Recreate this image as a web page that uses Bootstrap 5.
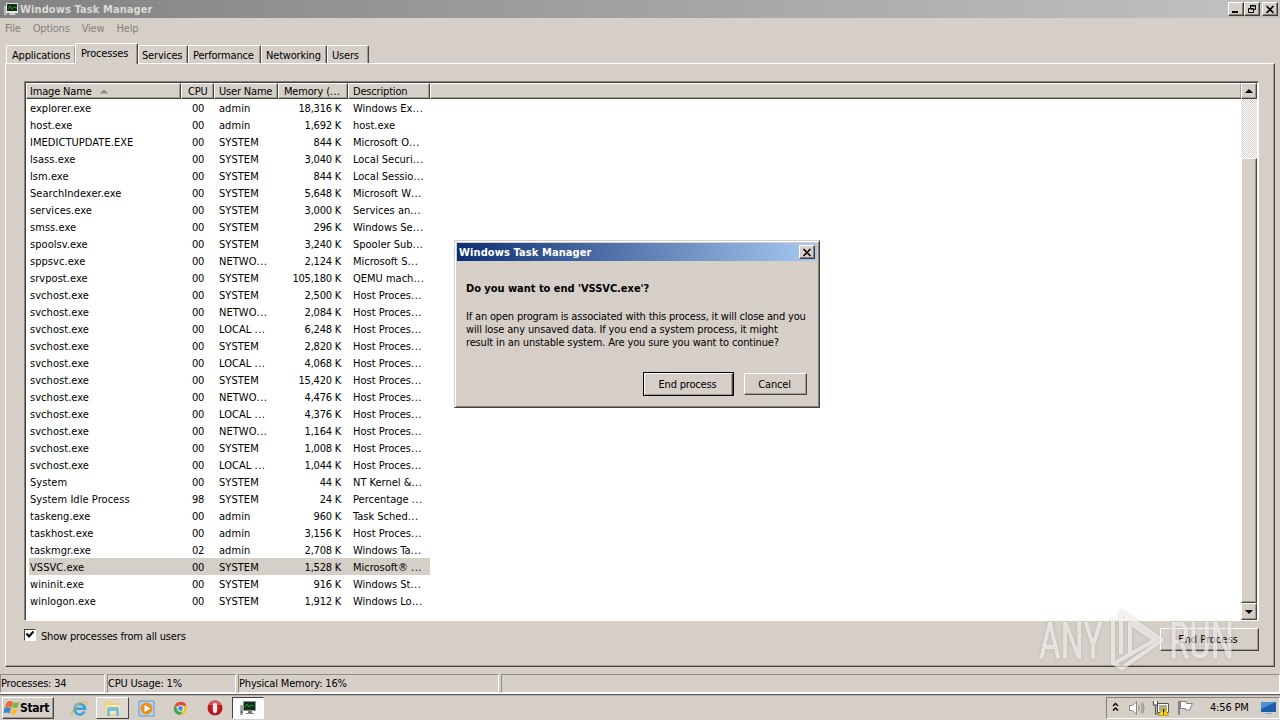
<!DOCTYPE html>
<html lang="en">
<head>
<meta charset="utf-8">
<title>Windows Task Manager</title>
<link href="https://cdn.jsdelivr.net/npm/bootstrap@5.3.0/dist/css/bootstrap.min.css" rel="stylesheet">
<style>
:root{--face:#d6cfc8}
body{width:1280px;height:720px;overflow:hidden;background:var(--face);color:#000;font:11px/13px "DejaVu Sans Condensed","DejaVu Sans",sans-serif;font-stretch:condensed;letter-spacing:-.18px;white-space:nowrap}
svg{display:block;flex:none}
.bold{font-weight:700;font-size:11px;letter-spacing:-.03px}
.wide{letter-spacing:.1px}
.titlebar{height:18px;background:linear-gradient(90deg,#828282,#c2c2c2);color:#dcd8d2;padding:0 2px 0 3px}
.winbtn{width:16px;height:14px;background:var(--face);border:1px solid;border-color:#fff #403d39 #403d39 #fff;box-shadow:inset -1px -1px #84807a;padding:0;display:flex;align-items:center;justify-content:center}
.menus{height:26px;color:#85817c;padding:4px 0 0 5px;gap:12px}
.tabstrip{height:19px;padding-left:6px;position:relative;z-index:1}
.tabitem{height:18px;border:1px solid;border-color:#fff #45423d transparent #fff;border-bottom:0;border-radius:2px 2px 0 0;padding:3px 0 0 4px;box-shadow:inset -1px 0 #a09b94}
.tabitem.on{height:21px;margin-left:-1px;background:var(--face);padding:3px 0 0 5px}
.page{margin:0 5px;height:604px;border:1px solid;border-color:#fff #45423d #45423d #fff;box-shadow:inset -1px -1px #a09b94;padding:17px 15px 0 18px}
.listbox{height:540px;border:1px solid;border-color:#84807a #fff #fff #84807a;box-shadow:inset 1px 1px #45423d;background:#fff;padding:1px 1px 0 1px;width:1235px}
.heads{height:16px;background:#d5d1c8}
.heads>div{border:1px solid;border-color:#fff #45423d #45423d #fff;padding-left:4px;line-height:15px;box-shadow:inset -1px -1px #a39e96;overflow:hidden}
.c1{width:155px}.c2{width:33px}.c3{width:64px}.c4{width:70px}.c5{width:82px}
.prow{height:17px;line-height:17px;width:401px;margin-left:3px;padding-top:1px}
.prow.sel{background:#d4cfc7}
.prow>div{padding-left:5px;letter-spacing:.05px}
.prow>.c1{width:152px;padding-left:1px}
.prow>.c2{padding:0 10px 0 0;text-align:right;letter-spacing:-.3px}
.prow>.c4{padding-right:7px;text-align:right;letter-spacing:-.22px}
.prow>.c5{width:80px;letter-spacing:0}
.dots{letter-spacing:.5px}
.sbar{width:16px;background:repeating-conic-gradient(#fff 0 25%,#d6cfc8 0 50%) 0 0/2px 2px}
.sbar>div{background:var(--face);border:1px solid;border-color:#fff #45423d #45423d #fff;box-shadow:inset -1px -1px #a09b94;display:flex;align-items:center;justify-content:center}
.check{width:12px;height:12px;background:#fff;border:1px solid;border-color:#45423d #fff #fff #45423d}
.pushbtn{background:var(--face);border:1px solid;border-color:#fff #45423d #45423d #fff;box-shadow:inset -1px -1px #a09b94;display:flex;align-items:center;justify-content:center}
.pushbtn.main{outline:1px solid #000;outline-offset:-1px;border-width:2px 2px 1px}
.statusbar{height:20px;margin-top:7px;border-bottom:1px solid #fff}
.statusbar>div{height:19px;border:1px solid;border-color:#918c86 #fff #fff #918c86;padding:2px 0 0 0;margin-right:2px}
.taskbar{height:26px;border-top:1px solid #5a5752;box-shadow:inset 0 1px #b5b0aa;padding:2px 0 0 2px}
.startbtn{width:52px;height:22px;border:1px solid;border-color:#fff #45423d #45423d #fff;box-shadow:inset -1px -1px #a09b94;font-size:12px;letter-spacing:-.35px}
.slot{width:33px;height:22px;display:flex;align-items:center;justify-content:center}
.slot.up{border:1px solid;border-color:#fff #45423d #45423d #fff;background:#ddd9d1}
.slot.down{border:1px solid;border-color:#45423d #fff #fff #45423d;background:#fbfbfb}
.tray{width:174px;height:22px;border:1px solid;border-color:#84807a #fff #fff #84807a}
.dlg{position:absolute;left:454px;top:240px;width:366px;height:168px;background:var(--face);border:1px solid;border-color:#d6cfc8 #45423d #45423d #d6cfc8;box-shadow:inset 1px 1px #fff,inset -1px -1px #84807a;padding:2px;z-index:5}
.dlgbar{height:18px;background:linear-gradient(90deg,#0f2f74,#a6caf0);color:#fff;padding:0 2px 0 2px}
.wm{position:absolute;left:1030px;top:600px;z-index:6;pointer-events:none;filter:drop-shadow(0 0 1.5px rgba(110,105,100,.5))}
</style>
</head>
<body class="d-flex flex-column">
<div class="titlebar d-flex align-items-center bold">
  <svg width="16" height="16" viewBox="0 0 16 16"><path d="M1 5h3v9H1z" fill="#bbb"/><path d="M3 2h12v10H3z" fill="#e5e5df"/><path d="M4 3h10v7H4z" fill="#102d18"/><path d="M5 8l2-3 2 3 2-2 3 1" stroke="#2c8f3c" fill="none"/><path d="M7 12h5l1 2H6z" fill="#d0d0cc"/></svg>
  <span class="me-auto wide" style="padding-left:1px">Windows Task Manager</span>
  <div class="winbtn"><svg width="10" height="9"><path d="M1 6h6v2H1z"/></svg></div>
  <div class="winbtn"><svg width="10" height="10" fill="none" stroke="#000"><path d="M3.500 4V1.500h5v4H7M3 2h6M1.500 4.500h5v4h-5zM1 5h6"/></svg></div>
  <div class="winbtn" style="margin-left:2px"><svg width="10" height="9" stroke="#000" stroke-width="1.600"><path d="M1.500 1l7 7M8.500 1l-7 7"/></svg></div>
</div>
<div class="menus d-flex"><span>File</span><span>Options</span><span>View</span><span>Help</span></div>
<div class="tabstrip d-flex align-items-end">
  <div class="tabitem" style="width:70px;padding-left:5px">Applications</div><div class="tabitem on" style="width:63px;margin-bottom:-1px">Processes</div><div class="tabitem" style="width:50px;padding-left:3px">Services</div><div class="tabitem" style="width:73px">Performance</div><div class="tabitem" style="width:66px">Networking</div><div class="tabitem" style="width:42px">Users</div>
</div>
<div class="page">
  <div class="listbox d-flex">
    <div class="flex-grow-1">
      <div class="heads d-flex"><div class="c1 d-flex align-items-center" style="padding-left:3px">Image Name<svg class="ms-2" width="8" height="5"><path d="M0 4.500L4 .5l4 4z" fill="#8d8980"/></svg></div><div class="c2" style="padding-left:6px">CPU</div><div class="c3">User Name</div><div class="c4" style="padding-left:5px">Memory (<span class="dots">...</span></div><div class="c5">Description</div><div class="flex-grow-1" style="border-right:0"></div></div>
      <div id="rows"></div>
    </div>
    <div class="sbar d-flex flex-column">
      <div style="height:16px"><svg width="8" height="4"><path d="M0 4L4 0l4 4z"/></svg></div>
      <div style="height:445px;margin-top:59px"></div>
      <div style="height:17px"><svg width="8" height="4"><path d="M0 0h8L4 4z"/></svg></div>
    </div>
  </div>
  <div class="d-flex justify-content-between" style="width:1235px;padding-top:7px">
    <div class="d-flex" style="padding-top:1px"><div class="check"><svg width="10" height="10"><path d="M1.500 3.500l2.500 3 4.500-5" fill="none" stroke="#000" stroke-width="2"/></svg></div><span style="padding:1px 0 0 5px">Show processes from all users</span></div>
    <div class="pushbtn" style="width:99px;height:23px;padding-right:3px;letter-spacing:0">End Process</div>
  </div>
</div>
<div class="statusbar d-flex"><div style="width:105px">Processes: 34</div><div style="width:129px">CPU Usage: 1%</div><div style="width:261px">Physical Memory: 16%</div><div class="flex-grow-1 me-0"></div></div>
<div class="taskbar d-flex">
  <div class="startbtn d-flex align-items-center bold"><svg width="17" height="16" viewBox="0 0 17 16"><path d="M4 2q3-2 6 0L8.500 7.500Q5 5.500 1.500 7.500z" fill="#ee6532"/><path d="M10.500 2.500q3 1 6-1l-2 6q-3 1-5.500-.5z" fill="#76b83c"/><path d="M1.500 8q3.500-2 6.500 0l-1.500 5.500q-3-2-6 0z" fill="#3e86d2"/><path d="M9 8q2.500 2 5.500 1l-2 5.500q-2 1-5-1z" fill="#f4bd32"/></svg>Start</div>
  <div class="slot" style="margin-left:9px"><svg width="17" height="17" viewBox="0 0 17 17"><path d="M13.500 11.500A5.300 5.300 0 1 1 14 8.800H4" fill="none" stroke="#35a4e1" stroke-width="2.600"/><path d="M2 14.500Q-1 16 2 10 8 1.500 14 1.500q3 0 1 4" fill="none" stroke="#e3bd43" stroke-width="1.200"/></svg></div>
  <div class="slot up"><svg width="18" height="17" viewBox="0 0 18 17"><path d="M1 4V1h6l1 2h8v12H1z" fill="#ecd27a"/><path d="M2 5h14v9H2z" fill="#f8e9a6"/><path d="M3 16V9q0-2 2-2h8q2 0 2 2v7h-3v-5H6v5z" fill="#78bfe6"/></svg></div>
  <div class="slot" style="margin-left:1px"><svg width="17" height="17" viewBox="0 0 17 17"><path d="M1 1h15v15H1z" fill="#b9d5ed" stroke="#5c99cf"/><circle cx="8.500" cy="8.500" r="6" fill="#ef8d20"/><path d="M6.500 5l6 3.500-6 3.500z" fill="#fff"/></svg></div>
  <div class="slot" style="margin-left:1px"><svg width="15" height="15" viewBox="0 0 16 16"><circle cx="8" cy="8" r="7" fill="#edc332"/><path d="M8 8L1.800 4.500A7 7 0 0 1 14.500 5H8z" fill="#dc4b3c"/><path d="M1.800 4.500A7 7 0 0 0 7.500 15L11 9.500 5 9z" fill="#3ca65a"/><circle cx="8" cy="8" r="3.400" fill="#fff"/><circle cx="8" cy="8" r="2.600" fill="#4489e8"/></svg></div>
  <div class="slot" style="margin-left:1px"><svg width="16" height="16"><circle cx="8" cy="8" r="7.500" fill="#b91823"/><path d="M1.500 5a7 7 0 0 1 13 0z" fill="#db5a5a"/><ellipse cx="8" cy="8" rx="2.300" ry="5.300" fill="#f6eaea"/></svg></div>
  <div class="slot down" style="margin-left:1px;width:32px"><svg width="18" height="16" viewBox="0 0 18 16"><path d="M1 5h3v10H1z" fill="#a5a9a5"/><path d="M2 11h1v2H2z" fill="#333"/><path d="M4 1h13v10H4z" fill="#8f948f"/><path d="M5 2h11v8H5z" fill="#102d18"/><path d="M6 7l2-3 2 3 2-2 3 1" stroke="#2c8f3c" fill="none"/><path d="M9 11h4v2h2v1H7v-1h2z" fill="#787c78"/></svg></div>
  <div class="tray d-flex align-items-center ms-auto">
    <svg width="9" height="12" style="margin:-3px 0 0 4px" fill="none" stroke="#000" stroke-width="1.400"><path d="M2 5l2.500-2.500L7 5M2 9.500L4.500 7 7 9.500"/></svg>
    <svg width="17" height="16" style="margin-left:8px" fill="none" stroke="#8c8a86"><path d="M1.500 5.500h3l4-4v13l-4-4h-3z" fill="#fff"/><path d="M10.500 5.500q2 2.500 0 5M12.500 3.500q3.500 4.500 0 9M14.500 2q3 6 0 12"/></svg>
    <svg width="18" height="17" style="margin-left:7px"><path d="M5.500 3.500h11v9h-11z" fill="#fff" stroke="#55534f"/><path d="M7 5h8v6H7z" fill="#aaa9a4"/><path d="M1 1h5v4H1z" fill="#fff"/><path d="M1.500 1v4h4V1M3.500 5v9H7" fill="none" stroke="#55534f" stroke-width="1.200"/><path d="M11.500 6.500l5 9h-10z" fill="#ffd91c" stroke="#c9a400"/><path d="M11 9h1.200v3.500H11zM11 13.500h1.200v1H11z"/></svg>
    <svg width="17" height="16" style="margin-left:7px"><path d="M2 1v14" stroke="#85827e" stroke-width="2"/><path d="M3.500 1.500h6v2h6l-3 6.500h-4V8.500h-5z" fill="#fff" stroke="#85827e"/></svg>
    <span style="margin:-2px 0 0 16px">4:56 PM</span>
    <svg width="16" height="14" style="margin-left:12px"><path d="M0 1h15v10H0z" fill="#1b5cad"/><path d="M0 1h15L0 8z" fill="#4b90d6"/><path d="M4 12h7v1H4z" fill="#7aa7cf"/></svg>
  </div>
</div>

<div class="dlg">
  <div class="dlgbar d-flex align-items-center justify-content-between bold"><span class="wide">Windows Task Manager</span><div class="winbtn"><svg width="10" height="9" stroke="#000" stroke-width="1.600"><path d="M1.500 1l7 7M8.500 1l-7 7"/></svg></div></div>
  <div style="padding:21px 9px 0">
    <div class="bold">Do you want to end 'VSSVC.exe'?</div>
    <div style="margin-top:15px">If an open program is associated with this process, it will close and you<br><span style="letter-spacing:-.15px">will lose any unsaved data. If you end a system process, it might<br>result in an unstable system. Are you sure you want to continue?</span></div>
  </div>
  <div class="d-flex justify-content-end" style="padding:23px 10px 0;gap:10px"><div class="pushbtn main" style="width:91px;height:24px;padding-right:2px">End process</div><div class="pushbtn" style="width:63px;height:22px;margin-top:1px;padding-right:2px">Cancel</div></div>
</div>

<svg class="wm" width="220" height="80" viewBox="1030 600 220 80">
  <g fill="#fff" fill-opacity=".6" stroke="#fff" stroke-opacity=".3" stroke-width=".8" font-family="Roboto" font-size="50" font-weight="400"><text x="1039" y="658" textLength="64" lengthAdjust="spacingAndGlyphs">ANY</text><text x="1169" y="658" textLength="65" lengthAdjust="spacingAndGlyphs">RUN</text></g>
  <path d="M1121 654V612l41 28-40 28-9-5V618M1115 663l40-23-25-17v31" fill="none" stroke="#fff" stroke-opacity=".62" stroke-width="4" stroke-linejoin="round"/>
</svg>

<script>
const data = `explorer.exe|00|admin|18,316|Windows Ex...
host.exe|00|admin|1,692|host.exe
IMEDICTUPDATE.EXE|00|SYSTEM|844|Microsoft O...
lsass.exe|00|SYSTEM|3,040|Local Securi...
lsm.exe|00|SYSTEM|844|Local Sessio...
SearchIndexer.exe|00|SYSTEM|5,648|Microsoft W...
services.exe|00|SYSTEM|3,000|Services an...
smss.exe|00|SYSTEM|296|Windows Se...
spoolsv.exe|00|SYSTEM|3,240|Spooler Sub...
sppsvc.exe|00|NETWO...|2,124|Microsoft S...
srvpost.exe|00|SYSTEM|105,180|QEMU mach...
svchost.exe|00|SYSTEM|2,500|Host Proces...
svchost.exe|00|NETWO...|2,084|Host Proces...
svchost.exe|00|LOCAL ...|6,248|Host Proces...
svchost.exe|00|SYSTEM|2,820|Host Proces...
svchost.exe|00|LOCAL ...|4,068|Host Proces...
svchost.exe|00|SYSTEM|15,420|Host Proces...
svchost.exe|00|NETWO...|4,476|Host Proces...
svchost.exe|00|LOCAL ...|4,376|Host Proces...
svchost.exe|00|NETWO...|1,164|Host Proces...
svchost.exe|00|SYSTEM|1,008|Host Proces...
svchost.exe|00|LOCAL ...|1,044|Host Proces...
System|00|SYSTEM|44|NT Kernel &amp;...
System Idle Process|98|SYSTEM|24|Percentage ...
taskeng.exe|00|admin|960|Task Sched...
taskhost.exe|00|admin|3,156|Host Proces...
taskmgr.exe|02|admin|2,708|Windows Ta...
VSSVC.exe|00|SYSTEM|1,528|Microsoft® ...
wininit.exe|00|SYSTEM|916|Windows St...
winlogon.exe|00|SYSTEM|1,912|Windows Lo...`;
const dots = text => text.replace('...', '<span class="dots">...</span>');
document.getElementById('rows').innerHTML = data.split('\n').map(line => {
  const [name, cpu, user, mem, desc] = line.split('|');
  return `<div class="prow d-flex ${name === 'VSSVC.exe' ? 'sel' : ''}"><div class="c1">${name}</div><div class="c2">${cpu}</div><div class="c3">${dots(user)}</div><div class="c4">${mem} K</div><div class="c5">${dots(desc)}</div></div>`;
}).join('');
</script>
<script src="https://cdn.jsdelivr.net/npm/bootstrap@5.3.0/dist/js/bootstrap.bundle.min.js"></script>
</body>
</html>
